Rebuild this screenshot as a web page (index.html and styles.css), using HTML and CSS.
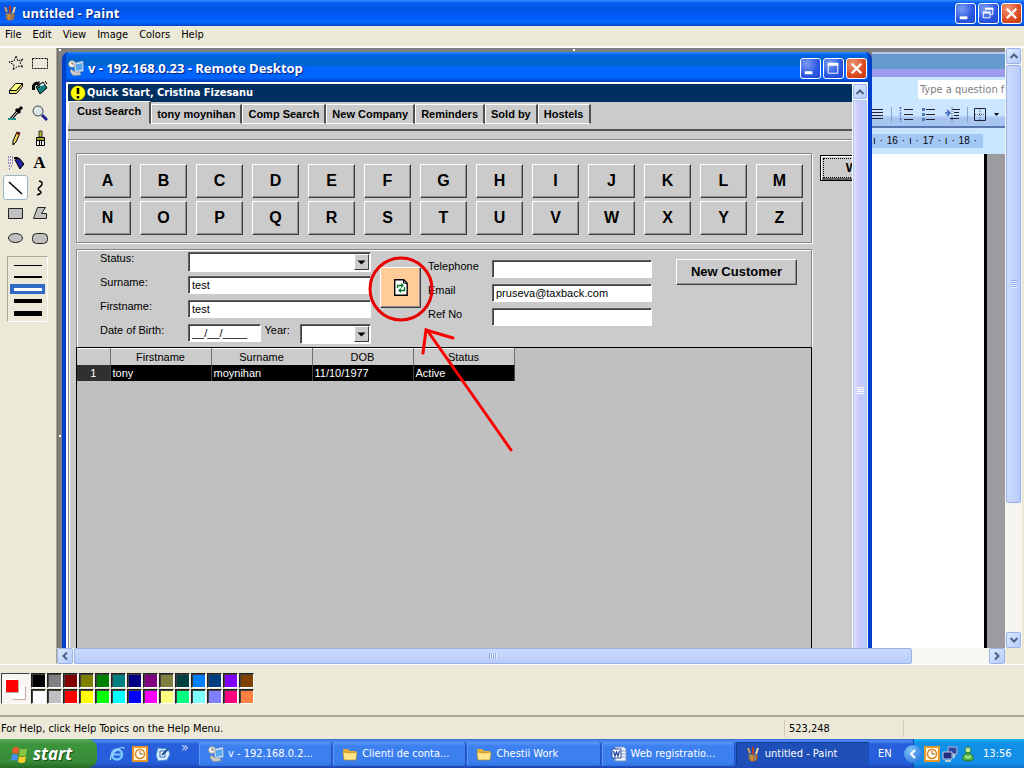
FILE: index.html
```html
<!DOCTYPE html>
<html lang="en">
<head>
<meta charset="utf-8">
<title>untitled - Paint</title>
<link rel="stylesheet" href="styles.css">
</head>
<body>
<svg class="defs" aria-hidden="true">
  <defs>
    <symbol id="i-paint" viewBox="0 0 16 16">
      <path d="M5 7l-2-5" stroke="#d8a050" stroke-width="2"/><path d="M8 8V1" stroke="#c03818" stroke-width="2"/><path d="M11 8l2-6" stroke="#e8d8a0" stroke-width="2"/>
      <path d="M3 6l1 3 2-1 2 1 2-1 2 1 1-3-1 8q-4 3-8 0z" fill="#b8642c"/><path d="M5 8v5M10 8v6" stroke="#58a8a0" stroke-width="1"/><path d="M7 9v6" stroke="#f0c040"/>
    </symbol>
    <symbol id="i-rdp" viewBox="0 0 16 16">
      <path d="M6 3l9-2 .5 10-8.500 2z" fill="#d8e8f8" stroke="#7890b0" stroke-width=".6"/><path d="M7.500 4.500l6.500-1.500.5 6.500-6.500 1.500z" fill="#58a8f0"/>
      <circle cx="4" cy="4" r="3.500" fill="#f0f0e8" stroke="#777" stroke-width=".6"/><path d="M4 2v2h2" stroke="#667" fill="none"/>
      <path d="M3 9l4 3 5 0 1 3-8 .5-3-4z" fill="#d0d0c8" stroke="#888" stroke-width=".6"/>
    </symbol>
    <symbol id="i-folder" viewBox="0 0 16 16">
      <path d="M1 3h5l2 2h6v9H2z" fill="#e8b030"/><path d="M1 6q7 2 14 0l-1 8H2z" fill="#ffe68c" stroke="#b88418" stroke-width=".6"/>
    </symbol>
    <symbol id="i-clock" viewBox="0 0 16 16">
      <rect x="1" y="1" width="14" height="14" fill="#fff4d8" stroke="#e89828" stroke-width="2"/><circle cx="8" cy="8" r="4.500" fill="#fff" stroke="#d88818" stroke-width="1.500"/><path d="M8 5v3h3" stroke="#a86010" fill="none"/>
    </symbol>
    <symbol id="a-up" viewBox="0 0 10 10"><path d="M1.500 7L5 3.500 8.500 7" fill="none" stroke="#4d6185" stroke-width="2"/></symbol>
    <symbol id="a-down" viewBox="0 0 10 10"><path d="M1.500 3L5 6.500 8.500 3" fill="none" stroke="#4d6185" stroke-width="2"/></symbol>
    <symbol id="a-left" viewBox="0 0 10 10"><path d="M7 1.500L3.500 5 7 8.500" fill="none" stroke="#4d6185" stroke-width="2"/></symbol>
    <symbol id="a-right" viewBox="0 0 10 10"><path d="M3 1.500L6.500 5 3 8.500" fill="none" stroke="#4d6185" stroke-width="2"/></symbol>
    <symbol id="w-min" viewBox="0 0 20 20"><path d="M4 14.500h8" stroke="#fff" stroke-width="3"/></symbol>
    <symbol id="w-max" viewBox="0 0 20 20"><path d="M4.500 5v10h10V5z" fill="none" stroke="#fff"/><path d="M4 5.500h11" stroke="#fff" stroke-width="3"/></symbol>
    <symbol id="w-restore" viewBox="0 0 20 20"><path d="M7 7V4.500h7.500V11H12" fill="none" stroke="#fff"/><path d="M7 5h8M4 9h8" stroke="#fff" stroke-width="2"/><path d="M4.500 8.500v6h7v-6" fill="none" stroke="#fff"/></symbol>
    <symbol id="w-close" viewBox="0 0 20 20"><path d="M5 5l10 10M15 5L5 15" stroke="#fff" stroke-width="2.400"/></symbol>
  </defs>
</svg>

<header class="titlebar">
  <svg class="ico16"><use href="#i-paint"/></svg>
  <h1 class="title">untitled - Paint</h1>
  <button class="winbtn" aria-label="Minimize"><svg><use href="#w-min"/></svg></button>
  <button class="winbtn" aria-label="Restore"><svg><use href="#w-restore"/></svg></button>
  <button class="winbtn close" aria-label="Close"><svg><use href="#w-close"/></svg></button>
</header>

<nav class="menubar">
  <button>File</button><button>Edit</button><button>View</button><button>Image</button><button>Colors</button><button>Help</button>
</nav>

<main class="workspace">
  <aside class="toolbox">
    <div class="tools">
      <button aria-label="Free-form select"><svg viewBox="0 0 16 16"><path d="M8 1l2 5 5-2-3 4 3 4-5-1-5 4 1-5-5-3 5-1z" fill="none" stroke="#000" stroke-dasharray="2 1"/></svg></button>
      <button aria-label="Select"><svg viewBox="0 0 16 16"><path d="M.5 3.500h15v10H.5z" fill="none" stroke="#000" stroke-dasharray="2 1"/></svg></button>
      <button aria-label="Eraser"><svg viewBox="0 0 16 16"><path d="M1.500 10.500l6-7h7l-6 7z" fill="#ffff80" stroke="#000"/><path d="M1.500 10.500v3h7l6-7v-3l-6 7z" fill="#e8e070" stroke="#000"/></svg></button>
      <button aria-label="Fill"><svg viewBox="0 0 16 16"><path d="M4 7l7-5 4 6-7 6z" fill="#108080" stroke="#000"/><path d="M6 6.500l5-3.500 1.500 2z" fill="#fff"/><path d="M7 1v7" stroke="#000"/><path d="M1.500 10V6q2-4 5-2" stroke="#000" stroke-width="3" fill="none"/><path d="M13 1l2 3" stroke="#000"/></svg></button>
      <button aria-label="Pick color"><svg viewBox="0 0 16 16"><path d="M3 14l7-8" stroke="#000" stroke-width="3"/><path d="M3 14l7-8" stroke="#fff"/><path d="M8 4l4 4M10 6l4-4" stroke="#000" stroke-width="3"/><path d="M0 14h8" stroke="#1a9090" stroke-width="2"/></svg></button>
      <button aria-label="Magnifier"><svg viewBox="0 0 16 16"><path d="M10 10l5 5" stroke="#202090" stroke-width="3"/><circle cx="6" cy="6" r="5" fill="#d8e4e8" stroke="#444"/><path d="M3 6q0-3 3-3" stroke="#fff" fill="none"/></svg></button>
      <button aria-label="Pencil"><svg viewBox="0 0 16 16"><path d="M9 2l3 1-4 9-3 3 0-4z" fill="#f0d850" stroke="#000"/><path d="M9 2l3 1-1 2-3-1z" fill="#802020"/><path d="M5 15v-2l2 1z"/></svg></button>
      <button aria-label="Brush"><svg viewBox="0 0 16 16"><path d="M7 1h3v6H7z" fill="#c0c020" stroke="#333"/><path d="M4.500 7.500h8v3h-8z" fill="#b0a020" stroke="#000"/><path d="M4.500 10.500h8v5h-8z" fill="#eee" stroke="#000"/><path d="M7.500 11v4M9.500 11v4" stroke="#000"/></svg></button>
      <button aria-label="Airbrush"><svg viewBox="0 0 16 16"><path d="M7 5l4-2 5 6-4 5z" fill="#2020a0" stroke="#000"/><path d="M6 3h4" stroke="#000" stroke-width="2"/><path d="M0 2h5M0 5h6M0 8h5M1 11h3M1 14h1" stroke="#2020c0" stroke-dasharray="1 1"/></svg></button>
      <button class="tool-text" aria-label="Text">A</button>
      <button class="selected" aria-label="Line"><svg viewBox="0 0 16 16"><path d="M1 2l13 12" stroke="#000" stroke-width="1.500"/></svg></button>
      <button aria-label="Curve"><svg viewBox="0 0 16 16"><path d="M7 1q5 1 2 5-5 3-1 5 3 2-3 4" fill="none" stroke="#000" stroke-width="1.500"/></svg></button>
      <button aria-label="Rectangle"><svg viewBox="0 0 16 16"><path d="M.5 3.500h14v10H.5z" fill="#c0c0c0" stroke="#222"/></svg></button>
      <button aria-label="Polygon"><svg viewBox="0 0 16 16"><path d="M5.500 2.500h8l-4 6h5v5h-13z" fill="#c0c0c0" stroke="#222"/></svg></button>
      <button aria-label="Ellipse"><svg viewBox="0 0 16 16"><ellipse cx="7.500" cy="8" rx="7" ry="4.500" fill="#c0c0c0" stroke="#222"/></svg></button>
      <button aria-label="Rounded rectangle"><svg viewBox="0 0 16 16"><rect x=".5" y="3.500" width="15" height="10" rx="4" fill="#c0c0c0" stroke="#222"/></svg></button>
    </div>
    <div class="widths">
      <button aria-label="1 px"><i class="w1"></i></button>
      <button aria-label="2 px"><i class="w2"></i></button>
      <button class="on" aria-label="3 px"><i class="w3"></i></button>
      <button aria-label="4 px"><i class="w4"></i></button>
      <button aria-label="5 px"><i class="w5"></i></button>
    </div>
  </aside>

  <div class="view">
    <div class="view-row">
      <div class="picture">
        <section class="rdp">
          <header class="rdp-title">
            <svg class="ico16"><use href="#i-rdp"/></svg>
            <h2 class="title">v - 192.168.0.23 - Remote Desktop</h2>
            <button class="winbtn" aria-label="Minimize"><svg><use href="#w-min"/></svg></button>
            <button class="winbtn" aria-label="Maximize"><svg><use href="#w-max"/></svg></button>
            <button class="winbtn close" aria-label="Close"><svg><use href="#w-close"/></svg></button>
          </header>
          <div class="rdp-body">
            <div class="app">
              <div class="app-head">
                <svg class="warn" viewBox="0 0 16 16"><circle cx="8" cy="8" r="7.500" fill="#ff0" stroke="#222" stroke-width=".6"/><path d="M8 3v6M8 11v2.500" stroke="#000" stroke-width="2.500"/></svg>
                <span>Quick Start, Cristina Fizesanu</span>
              </div>
              <nav class="tabs">
                <button class="tab active">Cust Search</button><button class="tab">tony moynihan</button><button class="tab">Comp Search</button><button class="tab">New Company</button><button class="tab">Reminders</button><button class="tab">Sold by</button><button class="tab">Hostels</button>
              </nav>
              <div class="page">
                <div class="main-col">
                  <div class="group letters">
                    <button>A</button><button>B</button><button>C</button><button>D</button><button>E</button><button>F</button><button>G</button><button>H</button><button>I</button><button>J</button><button>K</button><button>L</button><button>M</button>
                    <button>N</button><button>O</button><button>P</button><button>Q</button><button>R</button><button>S</button><button>T</button><button>U</button><button>V</button><button>W</button><button>X</button><button>Y</button><button>Z</button>
                  </div>
                  <form class="group search">
                    <div class="fields left">
                      <label for="status">Status:</label>
                      <span class="drop"><select id="status"><option></option></select><svg viewBox="0 0 16 16"><path d="M3 6h10l-5 5z"/></svg></span>
                      <label for="surname">Surname:</label>
                      <input id="surname" type="text" value="test">
                      <label for="firstname">Firstname:</label>
                      <input id="firstname" type="text" value="test">
                      <label for="dob">Date of Birth:</label>
                      <div class="dob">
                        <input id="dob" type="text" value="__/__/____">
                        <label for="year">Year:</label>
                        <span class="drop"><select id="year"><option></option></select><svg viewBox="0 0 16 16"><path d="M3 6h10l-5 5z"/></svg></span>
                      </div>
                    </div>
                    <button type="button" class="refresh" aria-label="Search">
                      <svg viewBox="0 0 14 17"><path d="M.7.7h9l3.500 3.500v12H.7z" fill="#fff" stroke="#000" stroke-width="1.400"/><path d="M9.500.7v3.500h3.500" fill="none" stroke="#000"/><path d="M3.500 9V6.500h5M10.500 8v3.500h-5" fill="none" stroke="#087830" stroke-width="1.300"/><path d="M7 4l3 2.500L7 9zM7 9l-3 2.500L7 14z" fill="#087830"/></svg>
                    </button>
                    <div class="fields right">
                      <label for="tel">Telephone</label><input id="tel" type="text">
                      <label for="email">Email</label><input id="email" type="text" value="pruseva@taxback.com">
                      <label for="ref">Ref No</label><input id="ref" type="text">
                    </div>
                    <button type="button" class="newcust">New Customer</button>
                  </form>
                  <div class="results">
                    <table>
                      <thead><tr><th class="num"></th><th>Firstname</th><th>Surname</th><th>DOB</th><th>Status</th></tr></thead>
                      <tbody><tr><td class="num">1</td><td>tony</td><td>moynihan</td><td>11/10/1977</td><td>Active</td></tr></tbody>
                    </table>
                  </div>
                </div>
                <div class="side-col"><button class="cut">W</button></div>
              </div>
            </div>
            <div class="rdp-scroll">
              <span class="sbtn"><svg><use href="#a-up"/></svg></span>
              <span class="track"><i></i><i></i><i></i><i></i></span>
            </div>
          </div>
        </section>

        <section class="word">
          <div class="word-top"></div>
          <div class="word-ask"><input type="text" aria-label="Ask" value="Type a question f"></div>
          <div class="word-tools">
            <svg viewBox="0 0 132 25" width="132" height="25">
              <path d="M0 7.500h11M0 10.500h11M0 13.500h11M0 16.500h11" stroke="#223"/>
              <path d="M19.500 5v16M95.500 5v16" stroke="#84a4d0"/>
              <path d="M32 7.500h9M32 12.500h9M32 17.500h9M54 7.500h9M54 12.500h9M54 17.500h9M80 7.500h8M82 10.500h5M82 13.500h5M78 16.500h9" stroke="#223"/>
              <path d="M28.500 5v4M28.500 10.500v4M28.500 16v4" stroke="#4870b8" stroke-width="1.500" stroke-dasharray="2 1"/>
              <path d="M50 6h3v3h-3zM50 11h3v3h-3zM50 16h3v3h-3z" fill="#5878b0"/>
              <path d="M73 11h4M75 8l3 3-3 3" stroke="#3868b8" fill="none" stroke-width="1.500"/><path d="M80 5v15" stroke="#556" stroke-dasharray="1 1"/>
              <path d="M102.500 6.500h11v12h-11z" fill="none" stroke="#223"/><path d="M108 7v11M103 12.500h10" stroke="#667" stroke-dasharray="1 1"/>
              <path d="M122 11h5l-2.500 3z"/>
            </svg>
          </div>
          <div class="word-ruler"><div class="scale"><span>ı</span><span>·</span><span>16</span><span>·</span><span>ı</span><span>·</span><span>17</span><span>·</span><span>ı</span><span>·</span><span>18</span><span>·</span></div></div>
          <div class="word-doc"><div class="sheet"></div></div>
        </section>

        <svg class="marks" viewBox="0 0 520 420" width="520" height="420" aria-hidden="true">
          <path d="M1 1h2v2H1zM515 1h2v2h-2zM1 387h2v2H1z" fill="#fff"/>
          <circle cx="343" cy="241" r="31" fill="none" stroke="#e80000" stroke-width="3"/>
          <path d="M453 402L369 282M395 290L368 282L365 305" fill="none" stroke="#fb0000" stroke-width="3" stroke-linecap="round"/>
        </svg>
      </div>
      <div class="vscroll">
        <span class="sbtn"><svg><use href="#a-up"/></svg></span>
        <span class="thumb"></span>
        <span class="gap"></span>
        <span class="sbtn"><svg><use href="#a-down"/></svg></span>
      </div>
    </div>
    <div class="hscroll">
      <span class="sbtn"><svg><use href="#a-left"/></svg></span>
      <span class="thumb"></span>
      <span class="gap"></span>
      <span class="sbtn"><svg><use href="#a-right"/></svg></span>
    </div>
  </div>
</main>

<section class="palette">
  <div class="current"><span class="back"></span><span class="fore"></span></div>
  <div class="swatches">
    <button class="c01" aria-label="Black"></button><button class="c02" aria-label="Gray"></button><button class="c03" aria-label="Maroon"></button><button class="c04" aria-label="Olive"></button><button class="c05" aria-label="Green"></button><button class="c06" aria-label="Teal"></button><button class="c07" aria-label="Navy"></button><button class="c08" aria-label="Purple"></button><button class="c09" aria-label="Khaki"></button><button class="c10" aria-label="Dark teal"></button><button class="c11" aria-label="Azure"></button><button class="c12" aria-label="Dark blue"></button><button class="c13" aria-label="Violet"></button><button class="c14" aria-label="Brown"></button>
    <button class="c15" aria-label="White"></button><button class="c16" aria-label="Silver"></button><button class="c17" aria-label="Red"></button><button class="c18" aria-label="Yellow"></button><button class="c19" aria-label="Lime"></button><button class="c20" aria-label="Cyan"></button><button class="c21" aria-label="Blue"></button><button class="c22" aria-label="Magenta"></button><button class="c23" aria-label="Light yellow"></button><button class="c24" aria-label="Spring green"></button><button class="c25" aria-label="Light cyan"></button><button class="c26" aria-label="Light blue"></button><button class="c27" aria-label="Rose"></button><button class="c28" aria-label="Orange"></button>
  </div>
</section>

<footer class="status">
  <span class="help">For Help, click Help Topics on the Help Menu.</span>
  <span class="pos">523,248</span>
  <span class="size"></span>
</footer>

<nav class="taskbar">
  <button class="start">
    <svg viewBox="0 0 20 20" width="20" height="20"><path d="M3 4q3-2 6 0L8 10q-3-2-6 0z" fill="#f05a28"/><path d="M10 4.500q3 2 7 0L16 11q-3 2-7 0z" fill="#8cc63f"/><path d="M2 11q3-2 6 0l-1 6q-3-2-6 0z" fill="#4a90f0"/><path d="M9 12q3 2 7 0l-1 6q-3 2-7 0z" fill="#ffd028"/></svg>
    <span>start</span>
  </button>
  <div class="quick">
    <svg class="ico16" viewBox="0 0 16 16"><circle cx="8" cy="8.500" r="5" fill="none" stroke="#78c8ff" stroke-width="2.500"/><path d="M4 8.500h9" stroke="#78c8ff" stroke-width="2"/><path d="M2 14Q-1 11 9 3q6-3 6 0" fill="none" stroke="#a8dcff" stroke-width="1.200"/></svg>
    <svg class="ico16"><use href="#i-clock"/></svg>
    <svg class="ico16" viewBox="0 0 16 16"><path d="M3 2l10 1 2 5-3 6-9 1-2-6z" fill="#d8ecff" stroke="#4890d0"/><path d="M5 5h5v6H5z" fill="#fff" stroke="#2868b0"/><path d="M7 9l6-6" stroke="#185090" stroke-width="2"/></svg>
    <span class="more">»</span>
  </div>
  <div class="tasks">
    <button><svg class="ico16"><use href="#i-rdp"/></svg>v - 192.168.0.2...</button>
    <button><svg class="ico16"><use href="#i-folder"/></svg>Clienti de conta...</button>
    <button><svg class="ico16"><use href="#i-folder"/></svg>Chestii Work</button>
    <button><svg class="ico16" viewBox="0 0 16 16"><path d="M4 1h9l2 2v12H4z" fill="#f4f8ff" stroke="#7890c0"/><path d="M10 5h4M10 8h4M10 11h4" stroke="#88a0d0"/><path d="M1 3h9v9H1z" fill="#fff" stroke="#2850a0"/><path d="M2.500 5l1.500 5 1.500-4L7 10l1.500-5" fill="none" stroke="#2040a0" stroke-width="1.300"/></svg>Web registratio...</button>
    <button class="pressed"><svg class="ico16"><use href="#i-paint"/></svg>untitled - Paint</button>
  </div>
  <span class="lang">EN</span>
  <div class="tray">
    <button class="chev" aria-label="Show hidden icons"><svg viewBox="0 0 10 10" width="10" height="10"><path d="M7 1L3 5l4 4" fill="none" stroke="#fff" stroke-width="2"/></svg></button>
    <svg class="ico16"><use href="#i-clock"/></svg>
    <svg class="ico16" viewBox="0 0 16 16"><path d="M6 1h9v7H6z" fill="#3048a0" stroke="#b0b8d0"/><path d="M1 6h9v7H1z" fill="#203080" stroke="#c0c8e0"/><path d="M3 15h6M12 8v4" stroke="#c0c8d8" stroke-width="2"/></svg>
    <svg class="ico16" viewBox="0 0 16 16"><circle cx="8" cy="4" r="3" fill="#b8e8a0" stroke="#3c8838"/><path d="M3 14q-1-6 5-7 6 1 5 7-5 2-10 0z" fill="#58b848" stroke="#2c7830"/><path d="M5 10q3 3 6 0" stroke="#c8f0b8" fill="none" stroke-width="1.500"/></svg>
    <span class="clock">13:56</span>
  </div>
</nav>
</body>
</html>
```
FILE: styles.css
```css
* { box-sizing: border-box; }
html, body { margin: 0; height: 100%; }
body {
  display: flex; flex-direction: column; overflow: hidden;
  background: #ece9d8; color: #000;
  font: 11px/14px "DejaVu Sans Condensed", "DejaVu Sans", sans-serif;
}
button, input, select { font: inherit; color: inherit; margin: 0; padding: 0; border: 0; border-radius: 0; background: none; }
h1, h2 { margin: 0; }
.defs { display: none; }
.ico16 { width: 16px; height: 16px; flex: none; }

/* window captions */
.titlebar, .rdp-title { display: flex; align-items: center; gap: 2px; flex: none; }
.titlebar { height: 26px; padding: 0 2px; background: linear-gradient(#2f8cff 0, #0a5cf0 3px, #0054e3 8px, #005cf8 18px, #0668ff 22px, #0045c8 26px); }
.title { flex: 1; padding-left: 2px; color: #fff; font: bold 13px/18px "Open Sans", "Noto Sans", sans-serif; text-shadow: 1px 1px 1px #0a1f80; }
.winbtn { width: 21px; height: 21px; flex: none; border: 1px solid #fff; border-radius: 3px; background: radial-gradient(circle at 30% 25%, #7c9cf4, #2a56e0 60%, #1e48d0); }
.winbtn.close { background: radial-gradient(circle at 30% 25%, #f09878, #dc4a20 60%, #c03a10); }
.winbtn svg { display: block; width: 19px; height: 19px; }

.menubar { display: flex; gap: 11px; flex: none; height: 22px; padding: 0 5px 2px; border-bottom: 2px solid #fff; }

.workspace { flex: 1; min-height: 0; display: flex; border-bottom: 1px solid #fff; }

/* toolbox */
.toolbox { width: 57px; flex: none; padding: 2px 5px 0 3px; border-right: 1px solid #aca899; }
.tools { display: grid; grid-template-columns: 25px 23px; grid-auto-rows: 25px; }
.tools button { display: flex; align-items: center; justify-content: center; }
.tools svg { width: 16px; height: 16px; }
.tools .selected { border: 1px solid #98b5c8; border-radius: 3px; background: #fff; }
.tools .tool-text { font: bold 17px/20px "Liberation Serif", serif; }
.widths { display: flex; flex-direction: column; justify-content: center; gap: 2px; width: 41px; height: 66px; margin: 6px 0 0 4px; padding: 0 2px; border: 1px solid; border-color: #aca899 #fff #fff #aca899; }
.widths button { display: flex; align-items: center; justify-content: center; height: 10px; }
.widths .on { background: #316ac5; }
.widths i { width: 28px; background: #000; }
.widths .on i { background: #fff; }
.w1 { height: 1px; } .w2 { height: 2px; } .w3 { height: 3px; } .w4 { height: 4px; } .w5 { height: 5px; }

/* canvas view */
.view { flex: 1; min-width: 0; display: flex; flex-direction: column; padding-right: 2px; }
.view-row { flex: 1; min-height: 0; display: flex; }
.picture { position: relative; flex: 1; min-width: 0; display: flex; overflow: hidden; padding: 4px 0 0 4px; background: #808080; border-left: 1px solid #716f64; }
.marks { position: absolute; left: 0; top: 0; pointer-events: none; }

.sbtn { display: flex; align-items: center; justify-content: center; flex: none; border: 1px solid #98b4e8; border-radius: 2px; background: linear-gradient(135deg, #dce8ff, #b4ccfa); }
.sbtn svg { width: 10px; height: 10px; }
.vscroll { width: 17px; flex: none; display: flex; flex-direction: column; background: #f6f5f0; }
.vscroll .sbtn { height: 16px; margin: 0 1px; }
.vscroll .thumb { flex: 438; margin: 1px; border: 1px solid #98b4e8; border-radius: 2px; background: repeating-linear-gradient(#8ca8e8 0 1px, #eef4ff 1px 2px) center / 6px 8px no-repeat, linear-gradient(90deg, #cbdafe, #b8ccfb); }
.vscroll .gap { flex: 128; }
.hscroll { height: 16px; flex: none; display: flex; margin-right: 17px; background: #f8f7f2; }
.hscroll .sbtn { width: 16px; }
.hscroll .thumb { flex: 838; margin: 0 1px; border: 1px solid #98b4e8; border-radius: 2px; background: repeating-linear-gradient(90deg, #8ca8e8 0 1px, #eef4ff 1px 2px) center / 8px 6px no-repeat, linear-gradient(#cbdafe, #b8ccfb); }
.hscroll .gap { flex: 76; }

/* remote desktop window */
.rdp { flex: 1; min-width: 0; display: flex; flex-direction: column; border: solid #0040c8; border-width: 0 4px; border-radius: 7px 7px 0 0; background: #0040c8; overflow: hidden; }
.rdp-title { height: 30px; padding: 2px 1px 0 2px; background: linear-gradient(#2f8cff 0, #0060f0 3px, #0064d0 6px, #0064d0 13px, #0064ff 15px, #0064ff 26px, #0038b0 30px); }
.rdp-body { flex: 1; min-height: 0; display: flex; padding-left: 2px; background: #fff; }
.app { flex: 1; min-width: 0; display: flex; flex-direction: column; background: #cbcbcb; border-top: 2px solid #fff; font: 11px/14px "Liberation Sans", Arial, sans-serif; }
.app-head { display: flex; align-items: center; gap: 1px; height: 18px; flex: none; padding-left: 2px; background: #003060; color: #fff; font: bold 11px/14px "DejaVu Sans Condensed", "DejaVu Sans", sans-serif; }
.warn { width: 16px; height: 16px; }
.tabs { display: flex; align-items: flex-end; flex: none; height: 29px; padding: 1px 0 5px; border-bottom: 2px solid #555; }
.tab { height: 20px; padding: 0 5px; border: solid #fff; border-width: 1px 0 1px 1px; border-right: 2px solid #505050; font: bold 11px/16px "Liberation Sans", Arial, sans-serif; white-space: nowrap; }
.tab.active { height: 23px; padding: 0 8px 3px; border-bottom-color: #cbcbcb; }
.page { flex: 1; min-height: 0; display: flex; gap: 8px; margin-top: 8px; padding: 13px 0 0 7px; border: solid #848484; border-width: 1px 0 0 1px; box-shadow: inset 1px 1px #fff; }
.main-col { flex: 1; min-width: 0; display: flex; flex-direction: column; }
.side-col { width: 32px; flex: none; padding-top: 2px; overflow: hidden; }
.group { border: 1px solid #848484; box-shadow: inset 1px 1px #fff, 1px 1px #fff; }
.letters { display: grid; grid-template-columns: repeat(13, 1fr); gap: 3px 9px; padding: 10px 8px 7px 7px; margin-bottom: 6px; }
.letters button, .newcust, .refresh { border: 1px solid; border-color: #fff #404040 #404040 #fff; box-shadow: inset -1px -1px #909090; background: #cbcbcb; }
.letters button { height: 34px; font: bold 16px/28px "Liberation Sans", Arial, sans-serif; }
.search { display: flex; align-items: flex-start; height: 98px; padding-left: 23px; border-bottom: 0; }
.fields { display: grid; grid-auto-rows: 24px; align-items: start; }
.fields label { padding-top: 1px; }
.fields input, .fields select { width: 100%; height: 18px; margin-top: 2px; padding: 0 3px; display: block; border: 1px solid; border-color: #606060 #fff #fff #606060; box-shadow: inset 1px 1px #404040; background: #fff; }
.fields select { height: 20px; appearance: none; }
.left { grid-template-columns: 88px 183px; }
.right { grid-template-columns: 64px 160px; margin: 8px 24px 0 7px; }
.drop { position: relative; display: block; }
.drop svg { position: absolute; right: 2px; top: 4px; width: 15px; height: 16px; border: 1px solid; border-color: #fff #404040 #404040 #fff; background: #cbcbcb; pointer-events: none; }
.dob { display: grid; grid-template-columns: 73px 32px 71px; justify-content: space-between; }
.refresh { display: flex; align-items: center; justify-content: center; width: 41px; height: 41px; margin: 17px 0 0 9px; background: #ffcb98; flex: none; }
.refresh svg { width: 14px; height: 17px; }
.newcust { width: 121px; height: 26px; margin-top: 9px; font: bold 13px/20px "Liberation Sans", Arial, sans-serif; }
.results { flex: 1; min-height: 0; border: solid #000; border-width: 1px 1px 0; background: #c0c0c0; }
table { width: 437px; table-layout: fixed; border-collapse: collapse; line-height: 14px; }
th { width: 101px; height: 16px; padding: 0; border-right: 1px solid #707070; border-top: 1px solid #fff; background: #cbcbcb; font-weight: normal; }
.num { width: 33px; }
td { height: 16px; padding: 0 2px; background: #000; color: #fff; border-right: 1px solid #444; }
td.num { background: #303030; text-align: center; }
.cut { width: 64px; height: 26px; border: 1px solid #000; background: #cbcbcb; box-shadow: inset 1px 1px #fff, inset -1px -2px #606060; outline: 1px dotted #000; outline-offset: -4px; font: bold 13px/20px "Liberation Sans", Arial, sans-serif; }
.rdp-scroll { width: 16px; flex: none; display: flex; flex-direction: column; padding: 2px 1px 0 1px; background: #fff; }
.rdp-scroll .sbtn { height: 15px; }
.rdp-scroll .track { flex: 1; display: flex; flex-direction: column; align-items: center; gap: 1px; margin-top: 1px; padding-top: 286px; border: 1px solid #b0c8f0; border-bottom: 0; background: linear-gradient(90deg, #dce4ff, #ccc8fc 40%, #b8ccf8); }
.rdp-scroll i { width: 7px; height: 1px; background: #fff; }

/* document window behind */
.word { width: 133px; flex: none; display: flex; flex-direction: column; background: #c8e6ff; }
.word-top { height: 25px; flex: none; background: linear-gradient(#b4c8f0 0 2px, #6699cc 2px 17px, #9c9cec 17px 25px); }
.word-ask { height: 25px; padding: 3px 0 2px 46px; }
.word-ask input { width: 100%; height: 19px; padding-left: 2px; background: #fff; color: #808080; }
.word-tools { height: 26px; background: linear-gradient(#cce6ff 0 13px, #a8c4f0 16px 24px, #5878b0 24px); }
.word-tools svg { display: block; }
.word-ruler { height: 26px; padding: 6px 22px 6px 0; }
.scale { display: flex; justify-content: space-between; height: 14px; padding: 0 6px 0 1px; background: #a4c8f4; font: 10px/13px "Liberation Sans", Arial, sans-serif; }
.word-doc { flex: 1; padding-right: 18px; background: #9c9ca0; }
.sheet { height: 100%; background: #fff; border-right: 3px solid #000; }

/* colour box */
.palette { display: flex; gap: 1px; flex: none; height: 51px; padding: 8px 0 0 1px; border-bottom: 1px solid #aca899; }
.current { position: relative; width: 29px; height: 31px; border: 1px solid; border-color: #404040 #fff #fff #404040; background: #f8f6f0; }
.current span { position: absolute; width: 14px; height: 14px; border: 1px solid; border-color: #fff #c8a8a0 #c8a8a0 #fff; }
.fore { left: 3px; top: 5px; background: #f00; }
.back { left: 10px; top: 12px; background: #fff; }
.swatches { display: grid; grid-template-columns: repeat(14, 16px); grid-auto-rows: 16px; }
.swatches button { width: 15px; height: 15px; border: 1px solid; border-color: #202020 #fff #fff #202020; box-shadow: inset 1px 1px #404040; }
.c01 { background: #000; } .c02 { background: #808080; } .c03 { background: #800000; } .c04 { background: #808000; }
.c05 { background: #008000; } .c06 { background: #008080; } .c07 { background: #000080; } .c08 { background: #800080; }
.c09 { background: #808040; } .c10 { background: #004040; } .c11 { background: #0080ff; } .c12 { background: #004080; }
.c13 { background: #8000ff; } .c14 { background: #804000; } .c15 { background: #fff; } .c16 { background: #c0c0c0; }
.c17 { background: #f00; } .c18 { background: #ff0; } .c19 { background: #0f0; } .c20 { background: #0ff; }
.c21 { background: #00f; } .c22 { background: #f0f; } .c23 { background: #ffff80; } .c24 { background: #00ff80; }
.c25 { background: #80ffff; } .c26 { background: #8080ff; } .c27 { background: #ff0080; } .c28 { background: #ff8040; }

.status { display: flex; flex: none; height: 23px; padding: 3px 1px 2px; border-top: 1px solid #aca899; line-height: 18px; }
.help { flex: 1; }
.pos { width: 119px; padding-left: 4px; border-left: 1px solid #d0ccb8; }
.size { width: 120px; border-left: 1px solid #d0ccb8; }

/* taskbar */
.taskbar { display: flex; flex: none; height: 29px; background: linear-gradient(#3168d5 0, #4c8cf4 2px, #2860dc 5px, #245edb 24px, #1c44b0 29px); color: #fff; }
.start { display: flex; align-items: center; gap: 3px; width: 97px; flex: none; padding-left: 10px; border-radius: 0 9px 9px 0; background: linear-gradient(#5cac5c 0, #3c943c 5px, #388e38 22px, #246c24 29px); font: italic bold 17px/24px "Open Sans", "Noto Sans", sans-serif; text-shadow: 1px 1px 1px #184818; }
.quick { display: flex; align-items: center; gap: 7px; width: 102px; flex: none; padding-left: 12px; }
.more { align-self: flex-start; padding-left: 3px; font-size: 14px; line-height: 16px; color: #c8dcff; }
.tasks { flex: 1; min-width: 0; display: flex; gap: 1px; padding: 3px 0 2px; }
.tasks button { flex: 1; min-width: 0; display: flex; align-items: center; gap: 4px; padding-left: 9px; border-radius: 2px; background: linear-gradient(#5c98fa 0, #3c80f0 4px, #3c80f0 20px, #3070e0); box-shadow: inset 1px 0 #5c98fa, inset -1px 0 #2454c0; white-space: nowrap; overflow: hidden; }
.tasks .pressed { background: #1e4fb8; box-shadow: inset 1px 1px #143c90; }
.lang { width: 44px; flex: none; padding-left: 9px; line-height: 30px; }
.tray { display: flex; align-items: center; gap: 2px; width: 111px; flex: none; background: linear-gradient(#18b8f4 0, #1290e8 4px, #1290e8 24px, #0c70c8 29px); border-left: 1px solid #1048a0; }
.chev { display: flex; align-items: center; justify-content: center; width: 18px; height: 18px; margin-left: -10px; border-radius: 9px; background: radial-gradient(circle at 35% 30%, #7cc4f8, #1c68d8); }
.clock { padding-left: 5px; }
```
